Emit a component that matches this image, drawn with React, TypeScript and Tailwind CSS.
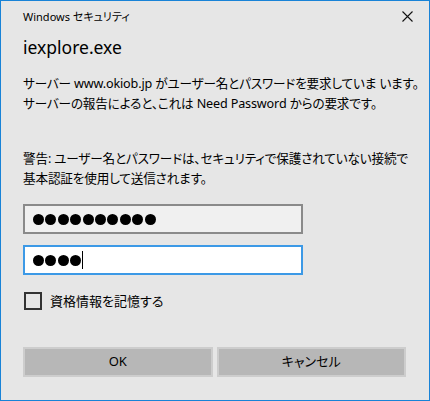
import React from "react";

const Dots = ({ n }: { n: number }) => (
  <div className="flex items-center gap-[1.4px]">
    {Array.from({ length: n }).map((_, i) => (
      <span key={i} className="block w-[11px] h-[11px] rounded-full bg-black" />
    ))}
  </div>
);

export default function App() {
  return (
    <div
      className="w-[430px] h-[401px] border border-[#1883d7] bg-[#e6e6e6] flex flex-col text-black [font-feature-settings:'palt']"
      style={{ fontFamily: "'Noto Sans', 'Noto Sans CJK JP', sans-serif" }}
    >
      <div className="h-[30px] flex items-center justify-between pl-[22px] pr-[16px]">
        <span className="text-[11px] leading-none">Windows セキュリティ</span>
        <svg width="11" height="11" viewBox="0 0 11 11">
          <path d="M0.5 0.5 L10.5 10.5 M10.5 0.5 L0.5 10.5" stroke="#111" strokeWidth="1.1" />
        </svg>
      </div>
      <div className="mt-[2px] pl-[22px] text-[17.5px] leading-[28px]">iexplore.exe</div>
      <div className="mt-[13px] pl-[22px] text-[12.6px] leading-[20px] whitespace-nowrap tracking-[-0.15px]">
        <div>サーバー www.okiob.jp がユーザー名とパスワードを要求していま います。</div>
        <div>サーバーの報告によると、これは Need Password からの要求です。</div>
      </div>
      <div className="mt-[35px] pl-[22px] text-[12.6px] leading-[20px] whitespace-nowrap tracking-[-0.15px]">
        <div>警告: ユーザー名とパスワードは、セキュリティで保護されていない接続で</div>
        <div>基本認証を使用して送信されます。</div>
      </div>
      <div className="mt-[15px] ml-[22px] w-[280px] h-[30px] border-2 border-[#8a8a8a] bg-[#f0f0f0] flex items-center pl-[8px]">
        <Dots n={10} />
      </div>
      <div className="mt-[11px] ml-[22px] w-[280px] h-[30px] border-2 border-[#3c99e6] bg-white flex items-center pl-[8px]">
        <Dots n={4} />
        <span className="block w-[1px] h-[18px] bg-black ml-[1px]" />
      </div>
      <div className="mt-[17px] ml-[23px] flex items-center gap-[8px]">
        <span className="block w-[18px] h-[18px] border-2 border-[#333]" />
        <span className="text-[13px] leading-[18px]">資格情報を記憶する</span>
      </div>
      <div className="mt-[37px] pl-[22px] pr-[23px] flex gap-[4px]">
        <button className="flex-1 h-[30px] bg-[#b7b7b7] border-2 border-[#cdcdcd] text-[13px] flex items-center justify-center">
          OK
        </button>
        <button className="flex-1 h-[30px] bg-[#b7b7b7] border-2 border-[#cdcdcd] text-[13px] flex items-center justify-center">
          キャンセル
        </button>
      </div>
    </div>
  );
}
